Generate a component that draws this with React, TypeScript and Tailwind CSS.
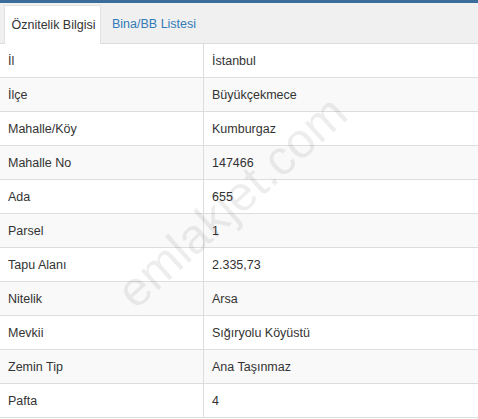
import React from "react";

const rows: [string, string][] = [
  ["İl", "İstanbul"],
  ["İlçe", "Büyükçekmece"],
  ["Mahalle/Köy", "Kumburgaz"],
  ["Mahalle No", "147466"],
  ["Ada", "655"],
  ["Parsel", "1"],
  ["Tapu Alanı", "2.335,73"],
  ["Nitelik", "Arsa"],
  ["Mevkii", "Sığıryolu Köyüstü"],
  ["Zemin Tip", "Ana Taşınmaz"],
  ["Pafta", "4"],
];

export default function App() {
  return (
    <div
      className="relative w-[478px] h-[419px] overflow-hidden bg-white text-[12.5px] text-[#333]"
      style={{ fontFamily: '"Liberation Sans", Arial, sans-serif' }}
    >
      <div className="h-[3px] bg-[#3b6d9b]" />
      <div className="flex h-[41px] items-end bg-[#f0f0f0] border-b border-[#dcdcdc] pl-[4px]">
        <div className="mb-[-1px] flex h-[39px] w-[97px] items-center justify-center border border-b-0 border-[#e2e2e2] bg-white pl-[2px] pt-[1px] text-[#333]">
          Öznitelik Bilgisi
        </div>
        <div className="flex h-[38px] items-center px-[11px] pt-[1px] text-[#337ab7]">
          Bina/BB Listesi
        </div>
      </div>
      <div className="flex flex-col">
        {rows.map(([k, v], i) => (
          <div
            key={k}
            className={`flex h-[34px] border-b border-[#dddddd] ${i % 2 === 1 ? "bg-[#f9f9f9]" : "bg-white"}`}
          >
            <div className="flex w-[204px] items-center border-r border-[#dddddd] pl-[8px] pt-[1px]">{k}</div>
            <div className="flex flex-1 items-center pl-[8px] pt-[1px]">{v}</div>
          </div>
        ))}
      </div>
      <div
        className="pointer-events-none absolute left-[232px] top-[202px] whitespace-nowrap text-[49px] text-[rgba(0,0,0,0.07)]"
        style={{
          transform: "translate(-50%, -50%) rotate(-42deg)",
        }}
      >
        emlakjet.com
      </div>
    </div>
  );
}
